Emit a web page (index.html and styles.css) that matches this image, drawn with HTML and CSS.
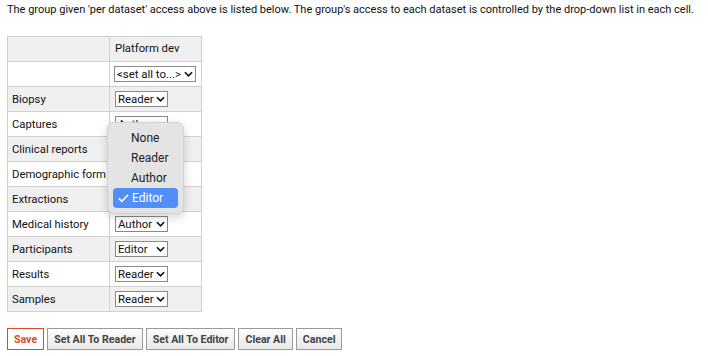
FILE: index.html
```html
<!DOCTYPE html>
<html>
<head>
    <meta charset="utf-8">
    <link rel="stylesheet" href="styles.css">
</head>
<body>
    <p class="intro">The group given 'per dataset' access above is listed below. The group's access to each dataset is controlled by the drop-down list in each cell.</p>

    <table class="access">
        <tr class="head">
            <th></th>
            <th>Platform dev</th>
        </tr>
        <tr>
            <td></td>
            <td><span class="sel wide">&lt;set all to...&gt;<svg viewBox="0 0 10 6"><path d="M1 1l4 4 4-4"/></svg></span></td>
        </tr>
        <tr class="alt">
            <td>Biopsy</td>
            <td><span class="sel">Reader<svg viewBox="0 0 10 6"><path d="M1 1l4 4 4-4"/></svg></span></td>
        </tr>
        <tr>
            <td>Captures</td>
            <td class="open">
                <span class="sel">Author<svg viewBox="0 0 10 6"><path d="M1 1l4 4 4-4"/></svg></span>
                <div class="menu">
                    <div class="opt">None</div>
                    <div class="opt">Reader</div>
                    <div class="opt">Author</div>
                    <div class="opt on"><svg viewBox="0 0 12 10"><path d="M1 5.5l3.2 3.2L11 1.5"/></svg>Editor</div>
                </div>
            </td>
        </tr>
        <tr class="alt">
            <td>Clinical reports</td>
            <td><span class="sel">Editor<svg viewBox="0 0 10 6"><path d="M1 1l4 4 4-4"/></svg></span></td>
        </tr>
        <tr>
            <td>Demographic form</td>
            <td><span class="sel">Reader<svg viewBox="0 0 10 6"><path d="M1 1l4 4 4-4"/></svg></span></td>
        </tr>
        <tr class="alt">
            <td>Extractions</td>
            <td><span class="sel">Reader<svg viewBox="0 0 10 6"><path d="M1 1l4 4 4-4"/></svg></span></td>
        </tr>
        <tr>
            <td>Medical history</td>
            <td><span class="sel">Author<svg viewBox="0 0 10 6"><path d="M1 1l4 4 4-4"/></svg></span></td>
        </tr>
        <tr class="alt">
            <td>Participants</td>
            <td><span class="sel">Editor<svg viewBox="0 0 10 6"><path d="M1 1l4 4 4-4"/></svg></span></td>
        </tr>
        <tr>
            <td>Results</td>
            <td><span class="sel">Reader<svg viewBox="0 0 10 6"><path d="M1 1l4 4 4-4"/></svg></span></td>
        </tr>
        <tr class="alt">
            <td>Samples</td>
            <td><span class="sel">Reader<svg viewBox="0 0 10 6"><path d="M1 1l4 4 4-4"/></svg></span></td>
        </tr>
    </table>

    <div class="actions">
        <button class="save">Save</button>
        <button>Set All To Reader</button>
        <button>Set All To Editor</button>
        <button>Clear All</button>
        <button>Cancel</button>
    </div>
</body>
</html>
```

FILE: styles.css
```css
body {
    margin: 0 7px;
    font-family: Roboto, 'Liberation Sans', sans-serif;
    font-size: 11.3px;
    color: #111;
    background: #fff;
}

.intro {
    margin: 3px 0 0;
    font-size: 11px;
    line-height: 14px;
    white-space: nowrap;
}

.access {
    margin-top: 19px;
    border-collapse: collapse;
    border: 1px solid #d0d0d0;
}

.access th,
.access td {
    border: 1px solid #d0d0d0;
    height: 25px;
    padding: 0 4px;
    box-sizing: border-box;
    text-align: left;
    font-weight: normal;
    white-space: nowrap;
}

.access td:first-child,
.access th:first-child {
    width: 102px;
    max-width: 102px;
    overflow: hidden;
}

.access td:last-child,
.access th:last-child {
    width: 92px;
    padding-left: 5px;
}

.access .head th {
    background: #f0f0f0;
    vertical-align: top;
    padding-top: 5px;
}

.access tr.alt td {
    background: #f0f0f0;
}

.sel {
    display: inline-flex;
    align-items: center;
    justify-content: space-between;
    box-sizing: border-box;
    width: 53px;
    height: 16px;
    padding: 0 2px 0 2px;
    border: 1px solid #8a8a8a;
    background: #fff;
    color: #111;
    font-size: 11.4px;
    vertical-align: middle;
}

.sel.wide {
    width: 82px;
    margin-left: -1px;
}

.sel svg {
    width: 9px;
    height: 6px;
    flex: none;
    fill: none;
    stroke: #111;
    stroke-width: 1.8;
}

.open {
    position: relative;
}

.menu {
    position: absolute;
    left: -3px;
    top: 10px;
    width: 77px;
    padding: 5px 5px;
    box-sizing: border-box;
    background: #e4e4e4;
    border: 1px solid #d2d2d2;
    border-radius: 7px;
    box-shadow: 0 3px 10px rgba(0, 0, 0, 0.18);
    z-index: 5;
}

.opt {
    height: 20px;
    line-height: 20px;
    padding-left: 18px;
    font-size: 12px;
    color: #222;
    border-radius: 4px;
    display: flex;
    align-items: center;
}

.opt.on {
    background: #4f8ff7;
    color: #fff;
    padding-left: 5px;
}

.opt.on svg {
    width: 11px;
    height: 10px;
    margin-right: 3px;
    fill: none;
    stroke: #fff;
    stroke-width: 1.8;
}

.actions {
    margin-top: 16px;
    display: flex;
    gap: 3px;
}

.actions button {
    height: 22px;
    padding: 0 6px;
    font-family: Roboto, 'Liberation Sans', sans-serif;
    font-size: 10.6px;
    font-weight: bold;
    color: #444;
    border: 1px solid #9a9a9a;
    border-radius: 0;
    background: linear-gradient(#fdfdfd, #e8e8e8);
}

.actions button.save {
    color: #e0482a;
    border-color: #e0482a;
    background: #fff;
}
```
